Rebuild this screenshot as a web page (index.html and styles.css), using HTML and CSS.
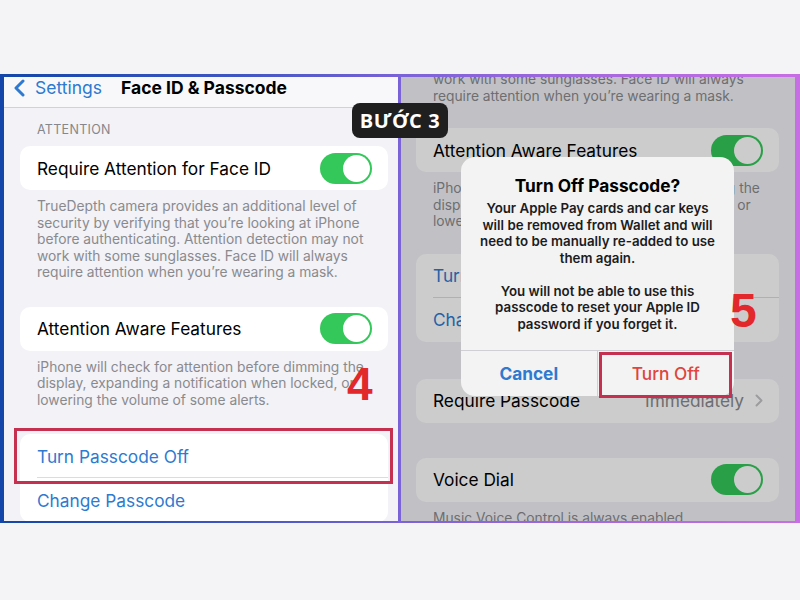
FILE: index.html
```html
<!DOCTYPE html>
<html lang="vi">
<head>
<meta charset="utf-8">
<title>Face ID &amp; Passcode</title>
<link rel="stylesheet" href="styles.css">
</head>
<body>
<div class="frame">
  <section class="panel panel-left">
    <header class="nav">
      <svg class="chev" width="12" height="18" viewBox="0 0 12 18"><path d="M10 2 L3 9 L10 16" fill="none" stroke="#2d7ad0" stroke-width="3" stroke-linecap="round" stroke-linejoin="round"/></svg>
      <span class="back">Settings</span>
      <span class="title">Face ID &amp; Passcode</span>
    </header>
    <div class="section-label">ATTENTION</div>
    <div class="card card-first">
      <div class="row"><span>Require Attention for Face ID</span><span class="toggle"></span></div>
    </div>
    <p class="foot">TrueDepth camera provides an additional level of<br>security by verifying that you’re looking at iPhone<br>before authenticating. Attention detection may not<br>work with some sunglasses. Face ID will always<br>require attention when you’re wearing a mask.</p>
    <div class="card card-gap">
      <div class="row"><span>Attention Aware Features</span><span class="toggle"></span></div>
    </div>
    <p class="foot">iPhone will check for attention before dimming the<br>display, expanding a notification when locked, or<br>lowering the volume of some alerts.</p>
    <div class="card card-gap">
      <div class="row link sep">Turn Passcode Off</div>
      <div class="row link">Change Passcode</div>
    </div>
    <div class="mark mark-4"></div>
    <div class="step step-4">4</div>
  </section>

  <section class="panel panel-right">
    <p class="foot foot-r foot-top">work with some sunglasses. Face ID will always<br>require attention when you’re wearing a mask.</p>
    <div class="card card-r card-r1">
      <div class="row"><span>Attention Aware Features</span><span class="toggle"></span></div>
    </div>
    <p class="foot foot-r">iPhone will check for attention before dimming the<br>display, expanding a notification when locked, or<br>lowering the volume of some alerts.</p>
    <div class="card card-r card-r2">
      <div class="row link sep">Turn Passcode Off</div>
      <div class="row link">Change Passcode</div>
    </div>
    <div class="card card-r card-r3">
      <div class="row"><span>Require Passcode</span><span class="value">Immediately<svg class="disc" width="8" height="13" viewBox="0 0 8 13"><path d="M1.5 1.5 L6.5 6.5 L1.5 11.5" fill="none" stroke="#c4c4c7" stroke-width="2" stroke-linecap="round" stroke-linejoin="round"/></svg></span></div>
    </div>
    <div class="card card-r card-r4">
      <div class="row"><span>Voice Dial</span><span class="toggle"></span></div>
    </div>
    <p class="foot foot-r">Music Voice Control is always enabled.</p>

    <div class="dim"></div>
    <div class="alert">
      <h2 class="alert-title">Turn Off Passcode?</h2>
      <p class="alert-msg">Your Apple Pay cards and car keys<br>will be removed from Wallet and will<br>need to be manually re-added to use<br>them again.<br><br>You will not be able to use this<br>passcode to reset your Apple ID<br>password if you forget it.</p>
      <div class="alert-actions">
        <span class="btn btn-cancel">Cancel</span>
        <span class="btn btn-off">Turn Off</span>
      </div>
    </div>
    <div class="mark mark-5"></div>
    <div class="step step-5">5</div>
  </section>
</div>
<div class="badge">BƯỚC 3</div>
</body>
</html>
```

FILE: styles.css
```css
html, body {
  margin: 0;
  padding: 0;
}
body {
  background: #f4f4f6;
  font-family: Inter, "Noto Sans", sans-serif;
  color: #111;
  position: relative;
  width: 800px;
  height: 600px;
  overflow: hidden;
}
.frame {
  margin-top: 74px;
  width: 800px;
  box-sizing: border-box;
  display: grid;
  grid-template-columns: 394px 394px;
  column-gap: 3px;
  padding: 3px 5px 2px 4px;
  background: linear-gradient(90deg, #1346a8 0%, #3f56c2 30%, #7a62d8 50%, #a868de 75%, #c86ee4 100%);
}
.panel {
  height: 444px;
  overflow: hidden;
  position: relative;
  background: #f2f2f7;
}
.nav {
  height: 30px;
  border-bottom: 1px solid #d2d2d6;
  background: #f8f8fa;
  display: flex;
  align-items: flex-start;
  padding-left: 9px;
  font-size: 17.5px;
  line-height: 21px;
}
.chev {
  margin-top: 2px;
}
.back {
  margin-left: 10px;
  color: #2d7ad0;
}
.title {
  margin-left: 19px;
  font-weight: 700;
  color: #000;
}
.section-label {
  margin: 14px 0 0 33px;
  font-size: 12.5px;
  line-height: 16px;
  color: #86868b;
  letter-spacing: 0.3px;
}
.card {
  margin: 8px 0 0 16px;
  width: 368px;
  background: #fff;
  border-radius: 10px;
}
.card-gap {
  margin-top: 26px;
}
.row {
  height: 44px;
  display: flex;
  align-items: center;
  justify-content: space-between;
  padding: 0 16px 0 17px;
  font-size: 17.3px;
  color: #000;
  box-sizing: border-box;
  position: relative;
}
.row.link {
  color: #2d7ad0;
}
.row.sep::after {
  content: "";
  position: absolute;
  left: 17px;
  right: 0;
  bottom: 0;
  height: 1px;
  background: #dcdce0;
}
.toggle {
  width: 52px;
  height: 31px;
  border-radius: 16px;
  background: #34c759;
  position: relative;
  flex: none;
}
.toggle::after {
  content: "";
  position: absolute;
  right: 2px;
  top: 2px;
  width: 27px;
  height: 27px;
  border-radius: 50%;
  background: #fff;
}
.foot {
  margin: 8px 0 0 33px;
  font-size: 13.8px;
  line-height: 16.5px;
  color: #8a8a8e;
}
.mark {
  position: absolute;
  border: 3px solid #c53050;
  box-sizing: border-box;
}
.mark-4 {
  left: 10px;
  top: 351px;
  width: 379px;
  height: 56px;
}
.step {
  position: absolute;
  font-family: "Liberation Sans", Arial, sans-serif;
  font-weight: 700;
  color: #e2282b;
  line-height: 1;
}
.step-4 {
  left: 343px;
  top: 284px;
  font-size: 46px;
}

/* right panel */
.foot-r {
  margin-left: 32px;
}
.foot-top {
  margin-top: -6px;
}
.card-r {
  margin-left: 15px;
  width: 363px;
}
.card-r1 { margin-top: 24px; }
.card-r2 { margin-top: 24px; }
.card-r3 { margin-top: 37px; }
.card-r4 { margin-top: 35px; }
.value {
  color: #8a8a8e;
  display: flex;
  align-items: center;
  gap: 11px;
}
.dim {
  position: absolute;
  inset: 0;
  background: rgba(0, 0, 0, 0.2);
}
.alert {
  position: absolute;
  left: 60px;
  top: 80px;
  width: 273px;
  height: 239px;
  border-radius: 14px;
  background: #f3f3f3;
  text-align: center;
  display: flex;
  flex-direction: column;
}
.alert-title {
  margin: 18px 0 0;
  font-size: 17.3px;
  line-height: 22px;
  font-weight: 700;
  color: #000;
}
.alert-msg {
  margin: 3px 0 0;
  font-size: 13.3px;
  line-height: 16.5px;
  font-weight: 600;
  color: #1c1c1e;
  flex: 1;
}
.alert-actions {
  height: 45px;
  border-top: 1px solid #d0d0d4;
  display: grid;
  grid-template-columns: 1fr 1fr;
}
.btn {
  display: flex;
  align-items: center;
  justify-content: center;
  font-size: 17.3px;
}
.btn-cancel {
  color: #2d7ad0;
  font-weight: 700;
  border-right: 1px solid #d0d0d4;
}
.btn-off {
  color: #e0443c;
  font-weight: 500;
}
.mark-5 {
  left: 198px;
  top: 275px;
  width: 133px;
  height: 46px;
}
.step-5 {
  left: 329px;
  top: 210px;
  font-size: 48px;
}
.badge {
  position: absolute;
  left: 352px;
  top: 103px;
  width: 96px;
  height: 35px;
  border-radius: 8px;
  background: #1f1f1f;
  color: #fff;
  font-family: "Open Sans", sans-serif;
  font-weight: 700;
  font-size: 20px;
  letter-spacing: 0.6px;
  line-height: 35px;
  text-align: center;
}
```
